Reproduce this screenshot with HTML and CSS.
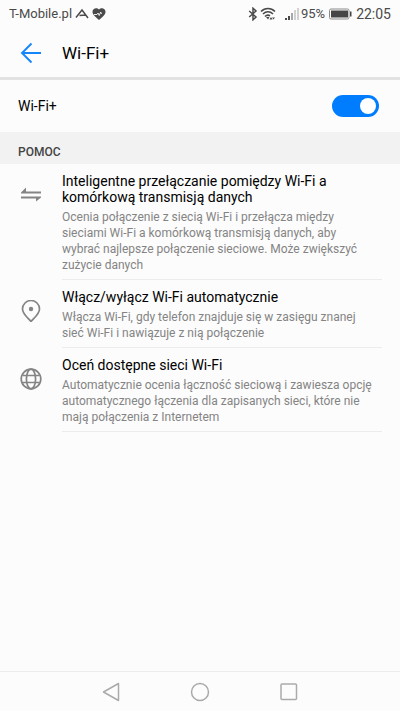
FILE: index.html
```html
<!DOCTYPE html>
<html lang="pl">
<head>
<meta charset="utf-8">
<meta name="viewport" content="width=device-width, initial-scale=1">
<title>Wi-Fi+</title>
<link rel="stylesheet" href="styles.css">
</head>
<body>
<div class="status">
  <span class="carrier">T-Mobile.pl</span>
  <svg class="signal-a" width="14" height="12" viewBox="0 0 14 12" fill="none" stroke="#4a4a4a" stroke-width="1.500"><path d="M1 9.500L7 2l6 8M4.500 7.500l6-.5"/></svg>
  <svg class="heart" width="14" height="12" viewBox="0 0 14 12"><path fill="#4a4a4a" d="M7 12C4 9.500.5 7 .5 3.800.5 0 5-.8 7 1.500c2-2.300 6.500-1.500 6.500 2.300C13.500 7 10 9.500 7 12z"/><path d="M2 6.500h3l1-1.500 1.200 2.500L8.700 4l.8 2" fill="none" stroke="#fcfcfc" stroke-width=".9"/></svg>
  <span class="spacer"></span>
  <svg width="10" height="14" viewBox="0 0 10 14" fill="none" stroke="#4a4a4a" stroke-width="1.500"><path d="M1.200 4l6.800 6-3 2.800V1.200L8 4l-6.800 6"/></svg>
  <svg class="wifi" width="16" height="13" viewBox="0 0 16 13" fill="none" stroke="#4a4a4a" stroke-width="1.600"><path d="M1 4.500c4-4 10-4 14 0M3 7c3-3 7-3 10 0M5 9.500c1.500-1.500 3.500-1.700 5-.8"/><path fill="#4a4a4a" stroke="none" d="M6 10h3.500L8 12.500zM9.500 12.500l1.500-2.500 1.500 2.500zM12 10.500h3l-1.500 2z"/></svg>
  <svg class="bars" width="14" height="12" viewBox="0 0 14 12"><path fill="#4a4a4a" d="M0 10h2v2H0zM3 8h2v4H3z"/><path fill="#a8a8a8" d="M6 5h2v7H6z"/><path fill="#d2d2d2" d="M9 2h2v10H9zM12 0h2v12h-2z"/></svg>
  <span class="percent">95%</span>
  <svg class="battery" width="23" height="12" viewBox="0 0 23 12"><rect x=".5" y="1" width="19.500" height="10" rx="1.500" fill="none" stroke="#8a8a8a"/><path fill="#454545" d="M2 2.500h17v7H2zM21 3.500h1.500v5H21z"/></svg>
  <time class="clock">22:05</time>
</div>
<header class="appbar">
  <button class="back" type="button" aria-label="Wstecz"><svg width="22" height="22" viewBox="0 0 22 22" fill="none" stroke="#1485fa" stroke-width="1.900"><path d="M21 11H2M11.500 1.500L2 11l9.500 9.500"/></svg></button>
  <h1>Wi-Fi+</h1>
</header>
<main>
  <div class="setting">
    <label for="wifi-plus">Wi-Fi+</label>
    <input class="switch" id="wifi-plus" type="checkbox" role="switch" checked>
  </div>
  <h2 class="section">POMOC</h2>
  <ul class="help">
    <li>
      <svg class="icon" width="22" height="22" viewBox="0 0 22 22"><path fill="#848484" d="M1 9.500V8.500l5-5V7.500h15v2zM1 12.500h20v1l-5 4v-3H1z"/></svg>
      <div class="text">
        <h3>Inteligentne przełączanie pomiędzy Wi-Fi a komórkową transmisją danych</h3>
        <p>Ocenia połączenie z siecią Wi-Fi i przełącza między sieciami Wi-Fi a komórkową transmisją danych, aby wybrać najlepsze połączenie sieciowe. Może zwiększyć zużycie danych</p>
      </div>
    </li>
    <li>
      <svg class="icon" width="22" height="22" viewBox="0 0 22 22"><path fill="none" stroke="#848484" stroke-width="1.700" d="M11 21.500C8 18 2.500 14 2.500 9a8.500 8.500 0 0 1 17 0c0 5-5.500 9-8.500 12.500z"/><circle cx="11" cy="9" r="2.200" fill="#848484"/></svg>
      <div class="text">
        <h3>Włącz/wyłącz Wi-Fi automatycznie</h3>
        <p>Włącza Wi-Fi, gdy telefon znajduje się w zasięgu znanej sieć Wi-Fi i nawiązuje z nią połączenie</p>
      </div>
    </li>
    <li>
      <svg class="icon" width="22" height="22" viewBox="0 0 22 22" fill="none" stroke="#848484" stroke-width="1.700"><circle cx="11" cy="11" r="9.800"/><ellipse cx="11" cy="11" rx="4.600" ry="9.800"/><path d="M2.500 7.500h17M2.500 14.500h17"/></svg>
      <div class="text">
        <h3>Oceń dostępne sieci Wi-Fi</h3>
        <p>Automatycznie ocenia łączność sieciową i zawiesza opcję automatycznego łączenia dla zapisanych sieci, które nie mają połączenia z Internetem</p>
      </div>
    </li>
  </ul>
</main>
<nav class="navbar">
  <button type="button" aria-label="Wstecz"><svg width="20" height="20" viewBox="0 0 20 20"><path d="M17.500 1.500v17L2.500 10z"/></svg></button>
  <button type="button" aria-label="Ekran główny"><svg width="20" height="20" viewBox="0 0 20 20"><circle cx="10" cy="10" r="8.500"/></svg></button>
  <button type="button" aria-label="Ostatnie"><svg width="20" height="20" viewBox="0 0 20 20"><rect x="2" y="2" width="15.500" height="15.500" rx="1"/></svg></button>
</nav>
</body>
</html>
```
FILE: styles.css
```css
* { box-sizing: border-box; }
body {
  margin: 0;
  min-height: 100vh;
  display: flex;
  flex-direction: column;
  background: #fcfcfc;
  color: #000;
  font-family: Roboto, sans-serif;
}
h1, h2, h3, p, ul { margin: 0; padding: 0; font-weight: 400; }
button { padding: 0; border: 0; background: none; }
svg { display: block; flex: none; }

.status {
  display: flex;
  align-items: center;
  height: 27px;
  padding: 0 9px;
  color: #4a4a4a;
  font-size: 13px;
}
.spacer { flex: 1; }
.signal-a { margin-left: 3px; }
.heart { margin-left: 3px; }
.wifi { margin-left: 2px; }
.bars { margin-left: 9px; }
.percent { margin-left: 2px; }
.battery { margin: 0 4px; }
.clock { font-size: 14px; }

.appbar {
  display: flex;
  align-items: center;
  height: 53px;
  padding: 2px 0 0 20px;
  border-bottom: 3px solid #e2e2e2;
}
.back { margin-right: 20px; }
h1 { font-size: 17px; }

main { flex: 1; }
.setting {
  display: flex;
  align-items: center;
  justify-content: space-between;
  height: 52px;
  padding: 0 21px 0 18px;
  font-size: 14px;
}
.switch {
  appearance: none;
  width: 47px;
  height: 22px;
  margin: 0;
  padding: 3px;
  border-radius: 11px;
  background: #007dff;
}
.switch::before {
  content: "";
  display: block;
  width: 16px;
  height: 16px;
  margin-left: auto;
  border-radius: 50%;
  background: #fff;
}
.switch:not(:checked) { background: #bbb; }
.switch:not(:checked)::before { margin-left: 0; }

.section {
  height: 32px;
  padding: 4px 18px 0;
  background: #f2f2f2;
  color: #444;
  font-size: 12px;
  font-weight: 500;
  line-height: 32px;
}
.help { list-style: none; }
.help li {
  display: flex;
  padding: 0 18px 0 20px;
}
.icon { margin: 20px 20px 0 0; }
.text {
  flex: 1;
  padding: 9px 0 6px;
  border-bottom: 1px solid #ececec;
}
h3 { margin-bottom: 4px; font-size: 14px; line-height: 16px; }
p { padding-right: 5px; color: #848484; font-size: 12px; line-height: 16px; }

.navbar {
  display: flex;
  justify-content: center;
  gap: 69px;
  height: 40px;
  border-top: 1px solid #ececec;
}
.navbar svg {
  fill: none;
  stroke: #aaa;
  stroke-width: 1.5;
  stroke-linejoin: round;
}
```
